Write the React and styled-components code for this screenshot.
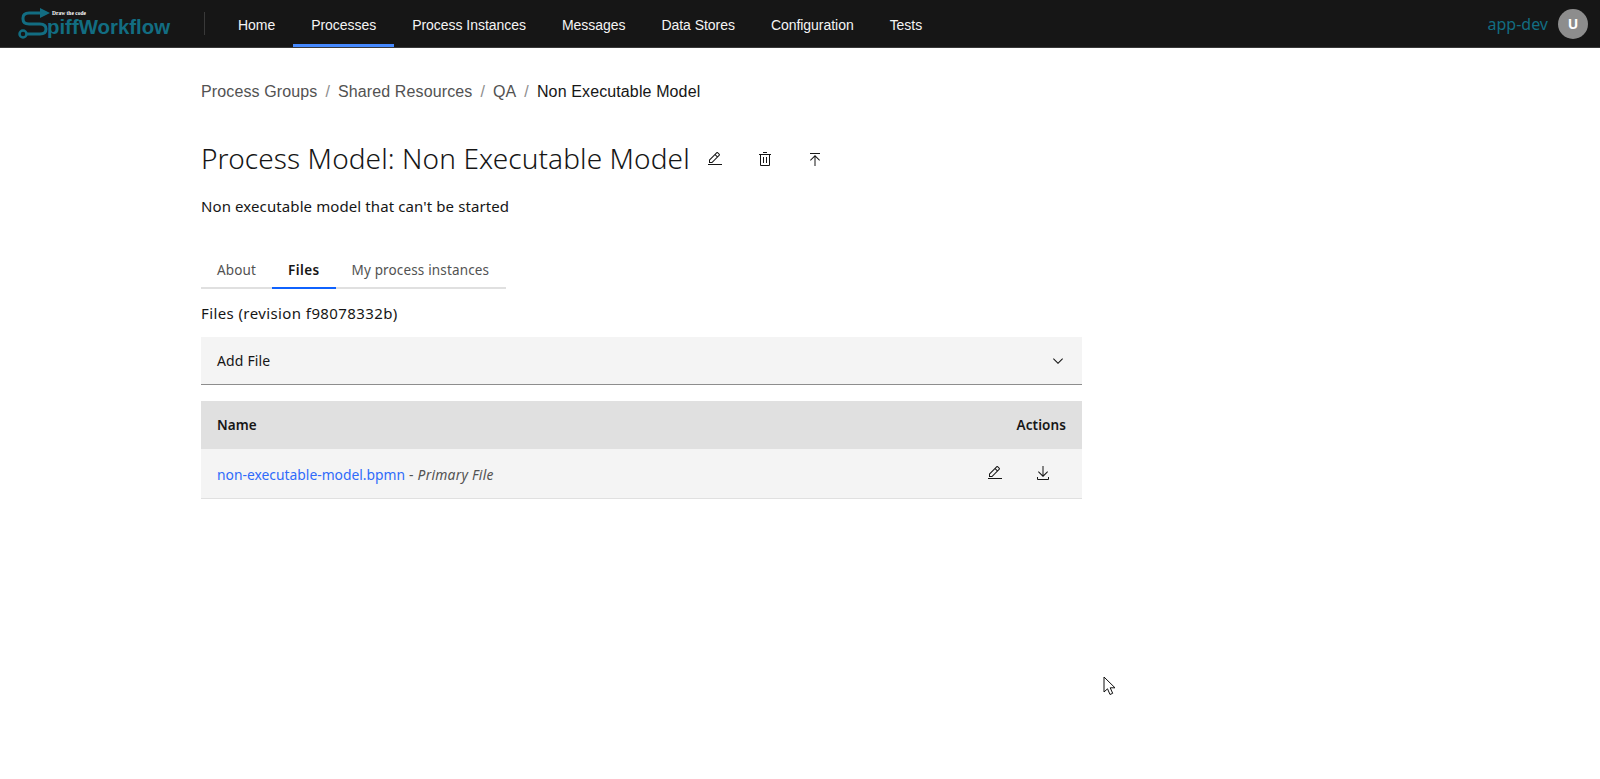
import styled, { createGlobalStyle } from "styled-components";

const PLEX = `"Noto Sans", "Open Sans", sans-serif`;

const GlobalStyle = createGlobalStyle`
  html, body {
    margin: 0;
    padding: 0;
    background: #fff;
    font-family: ${PLEX};
  }
`;

const PencilIcon = ({ size = 16 }) => (
  <svg width={size} height={size} viewBox="0 0 32 32" fill="currentColor">
    <path d="M2 26h28v2H2z" />
    <path d="M25.4 9c.8-.8.8-2 0-2.8l-3.6-3.6c-.8-.8-2-.8-2.8 0L4 17.6V24h6.4L25.4 9zm-5-5L24 7.6l-3 3L17.400 7l3-3zM6 22v-3.600l10-10 3.600 3.600-10 10H6z" />
  </svg>
);

const TrashIcon = ({ size = 16 }) => (
  <svg width={size} height={size} viewBox="0 0 32 32" fill="currentColor">
    <path d="M12 12h2v12h-2zM18 12h2v12h-2z" />
    <path d="M4 6v2h2v20a2 2 0 0 0 2 2h16a2 2 0 0 0 2-2V8h2V6H4zm4 22V8h16v20H8zM12 2h8v2h-8z" />
  </svg>
);

const UploadIcon = ({ size = 16 }) => (
  <svg width={size} height={size} viewBox="0 0 32 32" fill="currentColor">
    <path d="M6 4h20v2H6zM6 18l1.400 1.400L15 11.800V30h2V11.800l7.600 7.600L26 18 16 8z" />
  </svg>
);

const DownloadIcon = ({ size = 16 }) => (
  <svg width={size} height={size} viewBox="0 0 32 32" fill="currentColor">
    <path d="M26 24v4H6v-4H4v4a2 2 0 0 0 2 2h20a2 2 0 0 0 2-2v-4h-2z" />
    <path d="M26 14l-1.400-1.400L17 20.200V2h-2v18.200l-7.600-7.600L6 14l10 10z" />
  </svg>
);

const ChevronIcon = () => (
  <svg width="16" height="16" viewBox="0 0 16 16" fill="currentColor">
    <path d="M8 11L3 6l.7-.7L8 9.600l4.300-4.300.7.700z" />
  </svg>
);

const LogoMark = () => (
  <svg width="52" height="42" viewBox="0 0 52 42" fill="none">
    <path
      d="M44 13H29q-6 0-6 5v1q0 5 6 5h11q6 0 6 5v0q0 5-6 5H27"
      stroke="#126d82"
      strokeWidth="3"
    />
    <circle cx="23" cy="34" r="3.500" stroke="#126d82" strokeWidth="2.500" />
    <path d="M40 8l10 5-10 5z" fill="#126d82" />
  </svg>
);

const Cursor = styled.svg`
  position: absolute;
  left: 1103px;
  top: 676px;
`;

const navItems = [
  "Home",
  "Processes",
  "Process Instances",
  "Messages",
  "Data Stores",
  "Configuration",
  "Tests",
];

const crumbs = ["Process Groups", "Shared Resources", "QA"];

const App = () => {
  return (
    <>
      <GlobalStyle />
      <Header>
        <Logo>
          <LogoMark />
          <LogoTag>Draw the code</LogoTag>
          <LogoText>piffWorkflow</LogoText>
        </Logo>
        <Divider />
        <Nav>
          {navItems.map((item) => (
            <NavItem key={item} $active={item === "Processes"}>
              {item}
            </NavItem>
          ))}
        </Nav>
        <UserArea>
          <UserName>app-dev</UserName>
          <Avatar>U</Avatar>
        </UserArea>
      </Header>

      <Content>
        <Breadcrumbs>
          {crumbs.map((crumb) => (
            <Crumb key={crumb}>
              {crumb}
              <Slash>/</Slash>
            </Crumb>
          ))}
          <CurrentCrumb>Non Executable Model</CurrentCrumb>
        </Breadcrumbs>

        <TitleRow>
          <Title>Process Model: Non Executable Model</Title>
          <TitleIcon>
            <PencilIcon />
          </TitleIcon>
          <TitleIcon>
            <TrashIcon />
          </TitleIcon>
          <TitleIcon>
            <UploadIcon />
          </TitleIcon>
        </TitleRow>

        <Description>Non executable model that can't be started</Description>

        <Tabs>
          <Tab>About</Tab>
          <Tab $active>Files</Tab>
          <Tab>My process instances</Tab>
        </Tabs>

        <Revision>Files (revision f98078332b)</Revision>

        <Accordion>
          Add File
          <ChevronIcon />
        </Accordion>

        <TableHead>
          <span>Name</span>
          <span>Actions</span>
        </TableHead>
        <TableRow>
          <span>
            <FileLink>non-executable-model.bpmn</FileLink>
            <FileNote>
              {" - "}
              <em>Primary File</em>
            </FileNote>
          </span>
          <RowActions>
            <RowIcon>
              <PencilIcon />
            </RowIcon>
            <RowIcon>
              <DownloadIcon />
            </RowIcon>
          </RowActions>
        </TableRow>
      </Content>

      <Cursor width="14" height="20" viewBox="0 0 14 20">
        <path
          d="M1 1v15l3.500-3.200 2.500 5.700 2.700-1.200-2.500-5.500h4.800z"
          fill="#fff"
          stroke="#111"
          strokeWidth="1"
        />
      </Cursor>
    </>
  );
};

export default App;

const Header = styled.header`
  display: flex;
  align-items: stretch;
  height: 47px;
  background: #161616;
  border-bottom: 1px solid #393939;
`;

const Logo = styled.div`
  position: relative;
  width: 204px;
  flex: none;
  overflow: hidden;
`;

const LogoTag = styled.span`
  position: absolute;
  left: 52px;
  top: 9px;
  font: 700 5.500px/8px "Liberation Serif", serif;
  color: #fff;
  white-space: nowrap;
`;

const LogoText = styled.span`
  position: absolute;
  left: 47px;
  top: 15px;
  font: 700 20.400px/25px "Liberation Sans", sans-serif;
  color: #126d82;
  white-space: nowrap;
`;

const Divider = styled.div`
  width: 1px;
  margin: 12px 0;
  background: #393939;
`;

const Nav = styled.nav`
  display: flex;
  margin-left: 15px;
`;

const NavItem = styled.a`
  display: flex;
  align-items: center;
  padding: 2px 18px 0;
  font: 400 14px/18px "Liberation Sans", sans-serif;
  letter-spacing: -0.04px;
  color: #f4f4f4;
  box-shadow: ${(p) => (p.$active ? "inset 0 -3px 0 #4589ff" : "none")};
`;

const UserArea = styled.div`
  display: flex;
  align-items: center;
  gap: 10px;
  margin-left: auto;
  padding-right: 12px;
`;

const UserName = styled.span`
  font-size: 16px;
  color: #126d82;
`;

const Avatar = styled.div`
  display: flex;
  align-items: center;
  justify-content: center;
  width: 30px;
  height: 30px;
  border-radius: 50%;
  background: #8d8d8d;
  color: #fff;
  font-size: 14px;
  font-weight: 700;
`;

const Content = styled.main`
  width: 881px;
  margin-left: 201px;
  color: #161616;
`;

const Breadcrumbs = styled.div`
  display: flex;
  align-items: center;
  padding-top: 34px;
  font: 400 16px/20px "Liberation Sans", sans-serif;
  letter-spacing: 0.12px;
`;

const Crumb = styled.span`
  color: #525252;
`;

const Slash = styled.span`
  margin: 0 8px;
  color: #8d8d8d;
`;

const CurrentCrumb = styled.span`
  color: #161616;
`;

const TitleRow = styled.div`
  display: flex;
  align-items: center;
  margin-top: 36px;
  height: 40px;
`;

const Title = styled.h1`
  margin: 0;
  font-size: 28px;
  font-weight: 300;
  line-height: 36px;
  letter-spacing: 0.1px;
  white-space: nowrap;
`;

const TitleIcon = styled.span`
  display: flex;
  align-items: center;
  justify-content: center;
  width: 50px;
  height: 40px;
  padding-top: 2px;
  box-sizing: border-box;
  color: #161616;
`;

const Description = styled.p`
  margin: 18px 0 0;
  font-size: 15px;
  letter-spacing: 0.1px;
  line-height: 20px;
`;

const Tabs = styled.div`
  display: flex;
  width: 305px;
  margin-top: 33px;
  box-shadow: inset 0 -2px 0 #e0e0e0;
`;

const Tab = styled.div`
  padding: 2px 16px 0;
  height: 38px;
  display: flex;
  align-items: center;
  font-size: 13.500px;
  letter-spacing: ${(p) => (p.$active ? "0.4px" : "0.15px")};
  font-weight: ${(p) => (p.$active ? 600 : 400)};
  color: ${(p) => (p.$active ? "#161616" : "#525252")};
  box-shadow: ${(p) => (p.$active ? "inset 0 -2px 0 #0f62fe" : "none")};
`;

const Revision = styled.p`
  margin: 14px 0 0;
  font-size: 15px;
  letter-spacing: 0.4px;
  line-height: 20px;
`;

const Accordion = styled.div`
  display: flex;
  align-items: center;
  justify-content: space-between;
  height: 47px;
  margin-top: 14px;
  padding: 0 16px;
  background: #f4f4f4;
  border-bottom: 1px solid #8d8d8d;
  font-size: 14px;
  letter-spacing: 0.15px;
`;

const TableHead = styled.div`
  display: flex;
  align-items: center;
  justify-content: space-between;
  height: 48px;
  margin-top: 16px;
  padding: 0 16px;
  background: #e0e0e0;
  font-size: 13.500px;
  letter-spacing: 0.1px;
  font-weight: 600;
`;

const TableRow = styled.div`
  display: flex;
  align-items: center;
  justify-content: space-between;
  height: 48px;
  padding: 1px 16px 0;
  background: #f4f4f4;
  border-bottom: 1px solid #e0e0e0;
  font-size: 13.850px;
`;

const FileLink = styled.a`
  color: #2f6bfa;
`;

const FileNote = styled.span`
  color: #525252;
  letter-spacing: 0.25px;
`;

const RowActions = styled.div`
  display: flex;
  margin-right: -1px;
  padding-bottom: 3px;
`;

const RowIcon = styled.span`
  display: flex;
  align-items: center;
  justify-content: center;
  width: 48px;
  height: 44px;
  color: #161616;
`;
